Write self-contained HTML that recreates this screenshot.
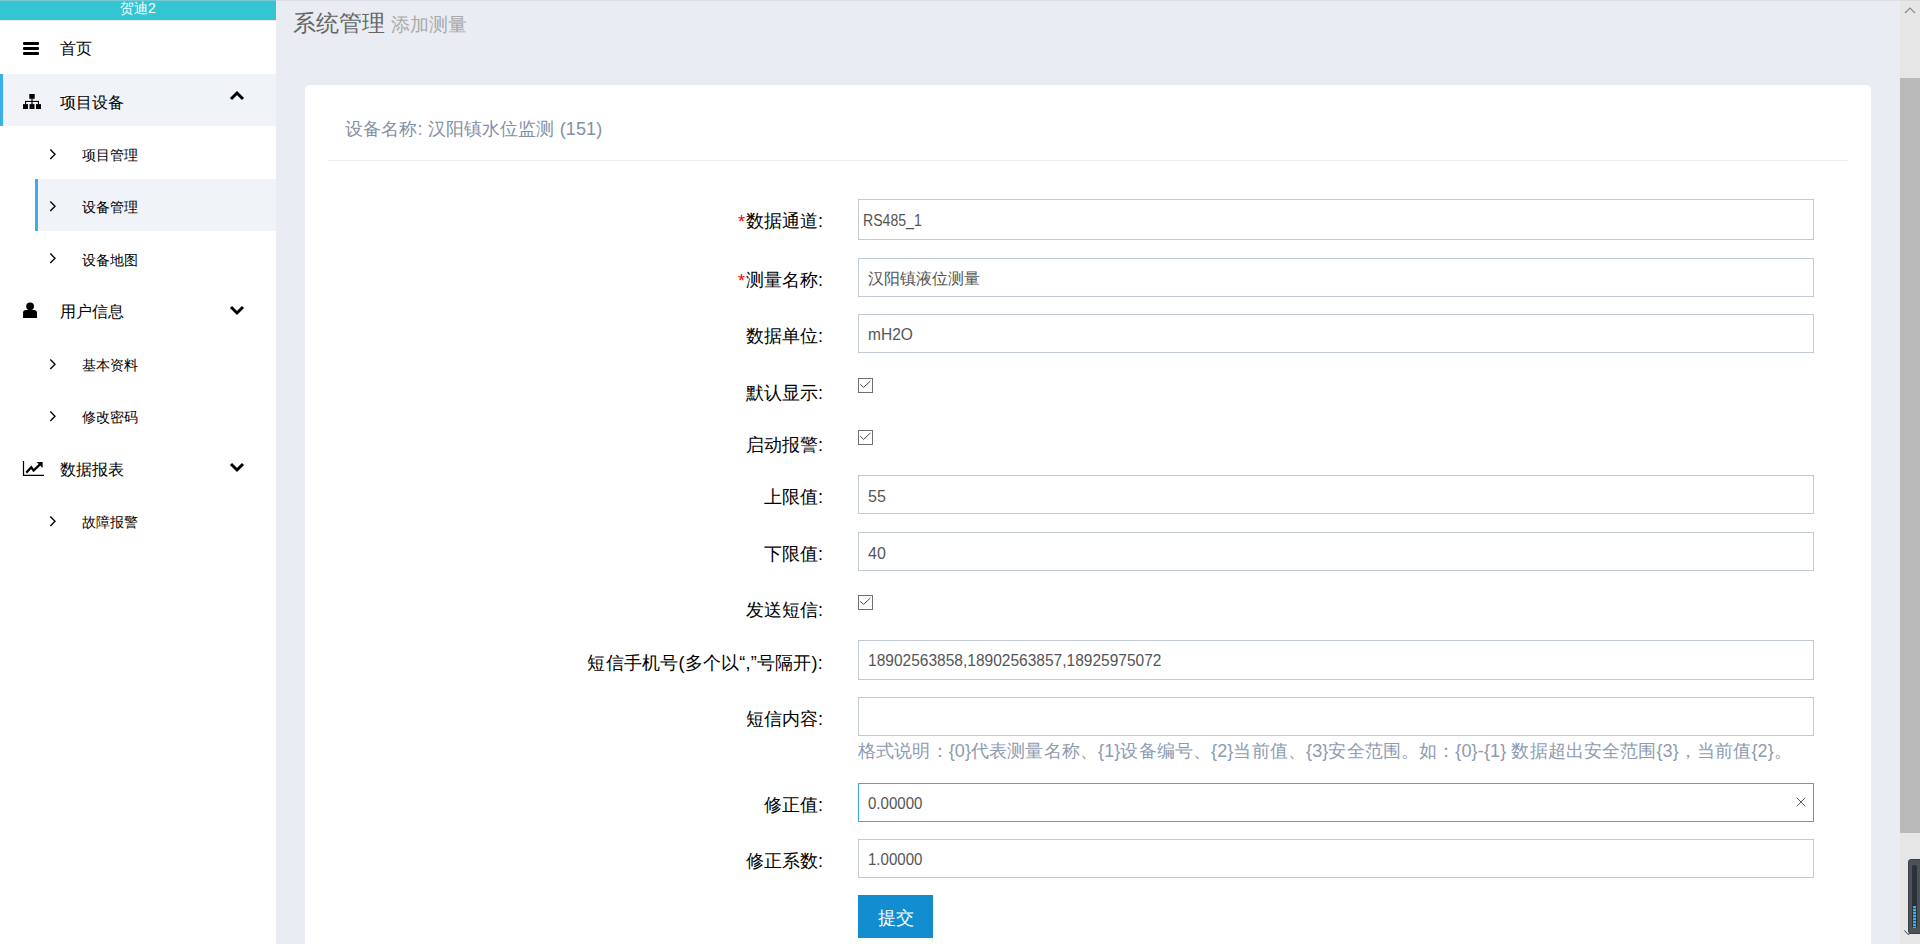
<!DOCTYPE html>
<html><head><meta charset="utf-8">
<style>
*{box-sizing:border-box;margin:0;padding:0}
html,body{width:1920px;height:944px;overflow:hidden}
body{background:#e9ecf3;font-family:"Liberation Sans",sans-serif;position:relative;color:#000}
.abs{position:absolute;white-space:nowrap}
#topline{position:absolute;left:0;top:0;width:1920px;height:1px;background:rgba(205,206,212,0.45);z-index:5}
#side{position:absolute;left:0;top:0;width:276px;height:944px;background:#fff}
#brand{position:absolute;left:0;top:0;width:276px;height:20px;background:#33c5d4;color:#fff;font-size:14px;line-height:16px;text-align:center}
#brandline{position:absolute;left:0;top:20px;width:276px;height:1px;background:#ececec}
.mi{position:absolute;left:0;width:276px;height:52px}
.mi.act{background:#f0f3f7}
.mi .bar{position:absolute;left:0;top:0;width:3px;height:52px;background:#3aaee8}
.mi .t{position:absolute;left:60px;font-size:16px;line-height:18px;white-space:nowrap}
.si{position:absolute;left:35px;width:241px;height:52px}
.si.act{background:#f0f3f7}
.si .bar{position:absolute;left:0;top:0;width:3px;height:52px;background:#3aaee8}
.si .t{position:absolute;left:47px;font-size:14px;line-height:16px;white-space:nowrap}
.si svg{position:absolute;left:14px}
#hdr{position:absolute;left:293px;top:9px;font-size:23px;line-height:28px;color:#666;white-space:nowrap}
#hdr small{font-size:18.6px;color:#aaa;margin-left:0px}
#card{position:absolute;left:305px;top:85px;width:1566px;height:900px;background:#fff;border-radius:5px}
#ctitle{position:absolute;left:345px;top:118px;font-size:18px;line-height:22px;color:#8391a5;white-space:nowrap;letter-spacing:0.12px}
#divider{position:absolute;left:328px;top:160px;width:1520px;height:1px;background:#e7ecf1}
.lbl{position:absolute;right:1097px;font-size:18px;line-height:22px;color:#000;white-space:nowrap;text-align:right}
.lbl i{font-style:normal;color:#f00;font-size:18px;vertical-align:top;position:relative;top:1px;margin-right:1px}
.inp{position:absolute;left:858px;width:956px;border:1px solid #c2cad8;background:#fff}
.inp .v{position:absolute;left:9px;font-size:16px;line-height:18px;color:#555;white-space:nowrap}
.cb{position:absolute;left:858px;width:15px;height:15px}
#help{position:absolute;left:858px;top:740px;font-size:18px;line-height:22px;color:#8e9bb0;white-space:nowrap;letter-spacing:0.13px}
#btn{position:absolute;left:858px;top:895px;width:75px;height:43px;background:#128dcf;color:#fff;font-size:18px;line-height:47px;text-align:center}
#sb{position:absolute;left:1900px;top:0;width:20px;height:944px;background:#e6e6e6}
#thumb{position:absolute;left:1900px;top:78px;width:20px;height:755px;background:#b9b9b9}
</style></head>
<body>
<div id="side">
  <div id="brand">贺迪2</div>
  <div id="brandline"></div>
  <!-- 首页 -->
  <div class="mi" style="top:22px">
    <svg class="abs" style="left:23px;top:20px" width="16" height="13" viewBox="0 0 16 13"><rect x="0" y="0" width="16" height="3" rx="1" fill="#000"/><rect x="0" y="5" width="16" height="3" rx="1" fill="#000"/><rect x="0" y="10" width="16" height="3" rx="1" fill="#000"/></svg>
    <div class="t" style="top:18px">首页</div>
  </div>
  <!-- 项目设备 -->
  <div class="mi act" style="top:74px">
    <div class="bar"></div>
    <svg class="abs" style="left:23px;top:20px" width="18" height="15" viewBox="0 0 18 15"><rect x="6.3" y="0" width="5.4" height="4.8" fill="#000"/><rect x="8.4" y="4.5" width="1.2" height="6" fill="#000"/><rect x="2" y="6.9" width="14" height="1.1" fill="#000"/><rect x="2" y="6.9" width="1.1" height="3.5" fill="#000"/><rect x="14.9" y="6.9" width="1.1" height="3.5" fill="#000"/><rect x="0" y="10.1" width="5" height="4.9" fill="#000"/><rect x="6.5" y="10.1" width="5" height="4.9" fill="#000"/><rect x="13" y="10.1" width="5" height="4.9" fill="#000"/></svg>
    <div class="t" style="top:20px">项目设备</div>
    <svg class="abs" style="left:229px;top:16px" width="16" height="11" viewBox="0 0 16 11"><path d="M2 9 L8 3 L14 9" stroke="#000" stroke-width="3" fill="none"/></svg>
  </div>
  <div class="si" style="top:126px">
    <svg style="top:23px" width="8" height="11" viewBox="0 0 8 11"><path d="M1.3 0.6 L6 5.3 L1.3 10" stroke="#000" stroke-width="1.35" fill="none"/></svg>
    <div class="t" style="top:21px">项目管理</div>
  </div>
  <div class="si act" style="top:179px">
    <div class="bar"></div>
    <svg style="top:22px" width="8" height="11" viewBox="0 0 8 11"><path d="M1.3 0.6 L6 5.3 L1.3 10" stroke="#000" stroke-width="1.35" fill="none"/></svg>
    <div class="t" style="top:20px">设备管理</div>
  </div>
  <div class="si" style="top:231px">
    <svg style="top:22px" width="8" height="11" viewBox="0 0 8 11"><path d="M1.3 0.6 L6 5.3 L1.3 10" stroke="#000" stroke-width="1.35" fill="none"/></svg>
    <div class="t" style="top:21px">设备地图</div>
  </div>
  <!-- 用户信息 -->
  <div class="mi" style="top:284px">
    <svg class="abs" style="left:22px;top:18px" width="16" height="16" viewBox="0 0 16 16"><circle cx="8.1" cy="4.3" r="3.9" fill="#000"/><path d="M1 16 L1 11 Q1 8 4 8 L12 8 Q15 8 15 11 L15 16 Z" fill="#000"/></svg>
    <div class="t" style="top:19px">用户信息</div>
    <svg class="abs" style="left:229px;top:21px" width="16" height="11" viewBox="0 0 16 11"><path d="M2 2 L8 8 L14 2" stroke="#000" stroke-width="3" fill="none"/></svg>
  </div>
  <div class="si" style="top:337px">
    <svg style="top:22px" width="8" height="11" viewBox="0 0 8 11"><path d="M1.3 0.6 L6 5.3 L1.3 10" stroke="#000" stroke-width="1.35" fill="none"/></svg>
    <div class="t" style="top:20px">基本资料</div>
  </div>
  <div class="si" style="top:389px">
    <svg style="top:22px" width="8" height="11" viewBox="0 0 8 11"><path d="M1.3 0.6 L6 5.3 L1.3 10" stroke="#000" stroke-width="1.35" fill="none"/></svg>
    <div class="t" style="top:20px">修改密码</div>
  </div>
  <!-- 数据报表 -->
  <div class="mi" style="top:442px">
    <svg class="abs" style="left:22px;top:19px" width="23" height="16" viewBox="0 0 23 16"><path d="M1.5 0 L1.5 14.4 L22 14.4" stroke="#000" stroke-width="1.2" fill="none"/><path d="M4.3 11.6 L9.3 6.3 L11.6 9.6 L18 3.4" stroke="#000" stroke-width="2.3" fill="none"/><path d="M14.6 1 L20.6 1 L20.6 7 Z" fill="#000"/></svg>
    <div class="t" style="top:19px">数据报表</div>
    <svg class="abs" style="left:229px;top:20px" width="16" height="11" viewBox="0 0 16 11"><path d="M2 2 L8 8 L14 2" stroke="#000" stroke-width="3" fill="none"/></svg>
  </div>
  <div class="si" style="top:494px">
    <svg style="top:22px" width="8" height="11" viewBox="0 0 8 11"><path d="M1.3 0.6 L6 5.3 L1.3 10" stroke="#000" stroke-width="1.35" fill="none"/></svg>
    <div class="t" style="top:20px">故障报警</div>
  </div>
</div>

<div id="hdr">系统管理 <small>添加测量</small></div>
<div id="card"></div>
<div id="ctitle">设备名称: 汉阳镇水位监测 (151)</div>
<div id="divider"></div>

<!-- rows -->
<div class="lbl" style="top:210px"><i>*</i>数据通道:</div>
<div class="inp" style="top:199px;height:41px"><div class="v" style="left:4px;top:12px;transform:scaleX(0.88);transform-origin:0 0">RS485_1</div></div>

<div class="lbl" style="top:269px"><i>*</i>测量名称:</div>
<div class="inp" style="top:258px;height:39px"><div class="v" style="top:11px">汉阳镇液位测量</div></div>

<div class="lbl" style="top:325px">数据单位:</div>
<div class="inp" style="top:314px;height:39px"><div class="v" style="top:11px;transform:scaleX(0.97);transform-origin:0 0">mH2O</div></div>

<div class="lbl" style="top:382px">默认显示:</div>
<svg class="cb" style="top:378px" viewBox="0 0 15 15"><rect x="0.5" y="0.5" width="14" height="14" fill="#fff" stroke="#707070"/><path d="M2.3 6.3 L5.6 9.4 L12.4 3.0" stroke="#444" stroke-width="1" fill="none"/></svg>

<div class="lbl" style="top:434px">启动报警:</div>
<svg class="cb" style="top:430px" viewBox="0 0 15 15"><rect x="0.5" y="0.5" width="14" height="14" fill="#fff" stroke="#707070"/><path d="M2.3 6.3 L5.6 9.4 L12.4 3.0" stroke="#444" stroke-width="1" fill="none"/></svg>

<div class="lbl" style="top:486px">上限值:</div>
<div class="inp" style="top:475px;height:39px"><div class="v" style="top:12px">55</div></div>

<div class="lbl" style="top:543px">下限值:</div>
<div class="inp" style="top:532px;height:39px"><div class="v" style="top:12px">40</div></div>

<div class="lbl" style="top:599px">发送短信:</div>
<svg class="cb" style="top:595px" viewBox="0 0 15 15"><rect x="0.5" y="0.5" width="14" height="14" fill="#fff" stroke="#707070"/><path d="M2.3 6.3 L5.6 9.4 L12.4 3.0" stroke="#444" stroke-width="1" fill="none"/></svg>

<div class="lbl" style="top:652px;letter-spacing:0.22px">短信手机号(多个以“,”号隔开):</div>
<div class="inp" style="top:640px;height:40px"><div class="v" style="top:11px;transform:scaleX(0.97);transform-origin:0 0">18902563858,18902563857,18925975072</div></div>

<div class="lbl" style="top:708px">短信内容:</div>
<div class="inp" style="top:697px;height:39px"></div>
<div id="help">格式说明：{0}代表测量名称、{1}设备编号、{2}当前值、{3}安全范围。如：{0}-{1} 数据超出安全范围{3}，当前值{2}。</div>

<div class="lbl" style="top:794px">修正值:</div>
<div class="inp" style="top:783px;height:39px;border-color:#3aa8f0"><div class="v" style="top:11px;transform:scaleX(0.94);transform-origin:0 0">0.00000</div>
  <svg class="abs" style="left:937px;top:13px" width="10" height="10" viewBox="0 0 10 10"><path d="M0.6 0.6 L9.4 9.4 M9.4 0.6 L0.6 9.4" stroke="#5a5a5a" stroke-width="1"/></svg>
</div>

<div class="lbl" style="top:850px">修正系数:</div>
<div class="inp" style="top:839px;height:39px"><div class="v" style="top:11px;transform:scaleX(0.94);transform-origin:0 0">1.00000</div></div>

<div id="btn">提交</div>

<div id="sb"></div>
<svg class="abs" style="left:1904px;top:6px" width="12" height="8" viewBox="0 0 12 8"><path d="M1 7 L6 2 L11 7" stroke="#888" stroke-width="1.2" fill="none"/></svg>
<div id="thumb"></div>
<div class="abs" style="left:1908px;top:859px;width:16px;height:75px;background:#4b5259;border-radius:3px;border:1px solid #3a3f45"></div>
<div class="abs" style="left:1912px;top:865px;width:5px;height:63px;background:#2b3137;border-radius:2px"></div>
<div class="abs" style="left:1913px;top:906px;width:3px;height:22px;background:repeating-linear-gradient(#33b4e4 0 2px,#1d5f80 2px 3px)"></div>
<svg class="abs" style="left:1904px;top:930px" width="8" height="7" viewBox="0 0 8 7"><path d="M0.5 0.5 L4 4.5 L7 3" stroke="#3a3f45" stroke-width="1" fill="none"/></svg>
<div id="topline"></div>
</body></html>
